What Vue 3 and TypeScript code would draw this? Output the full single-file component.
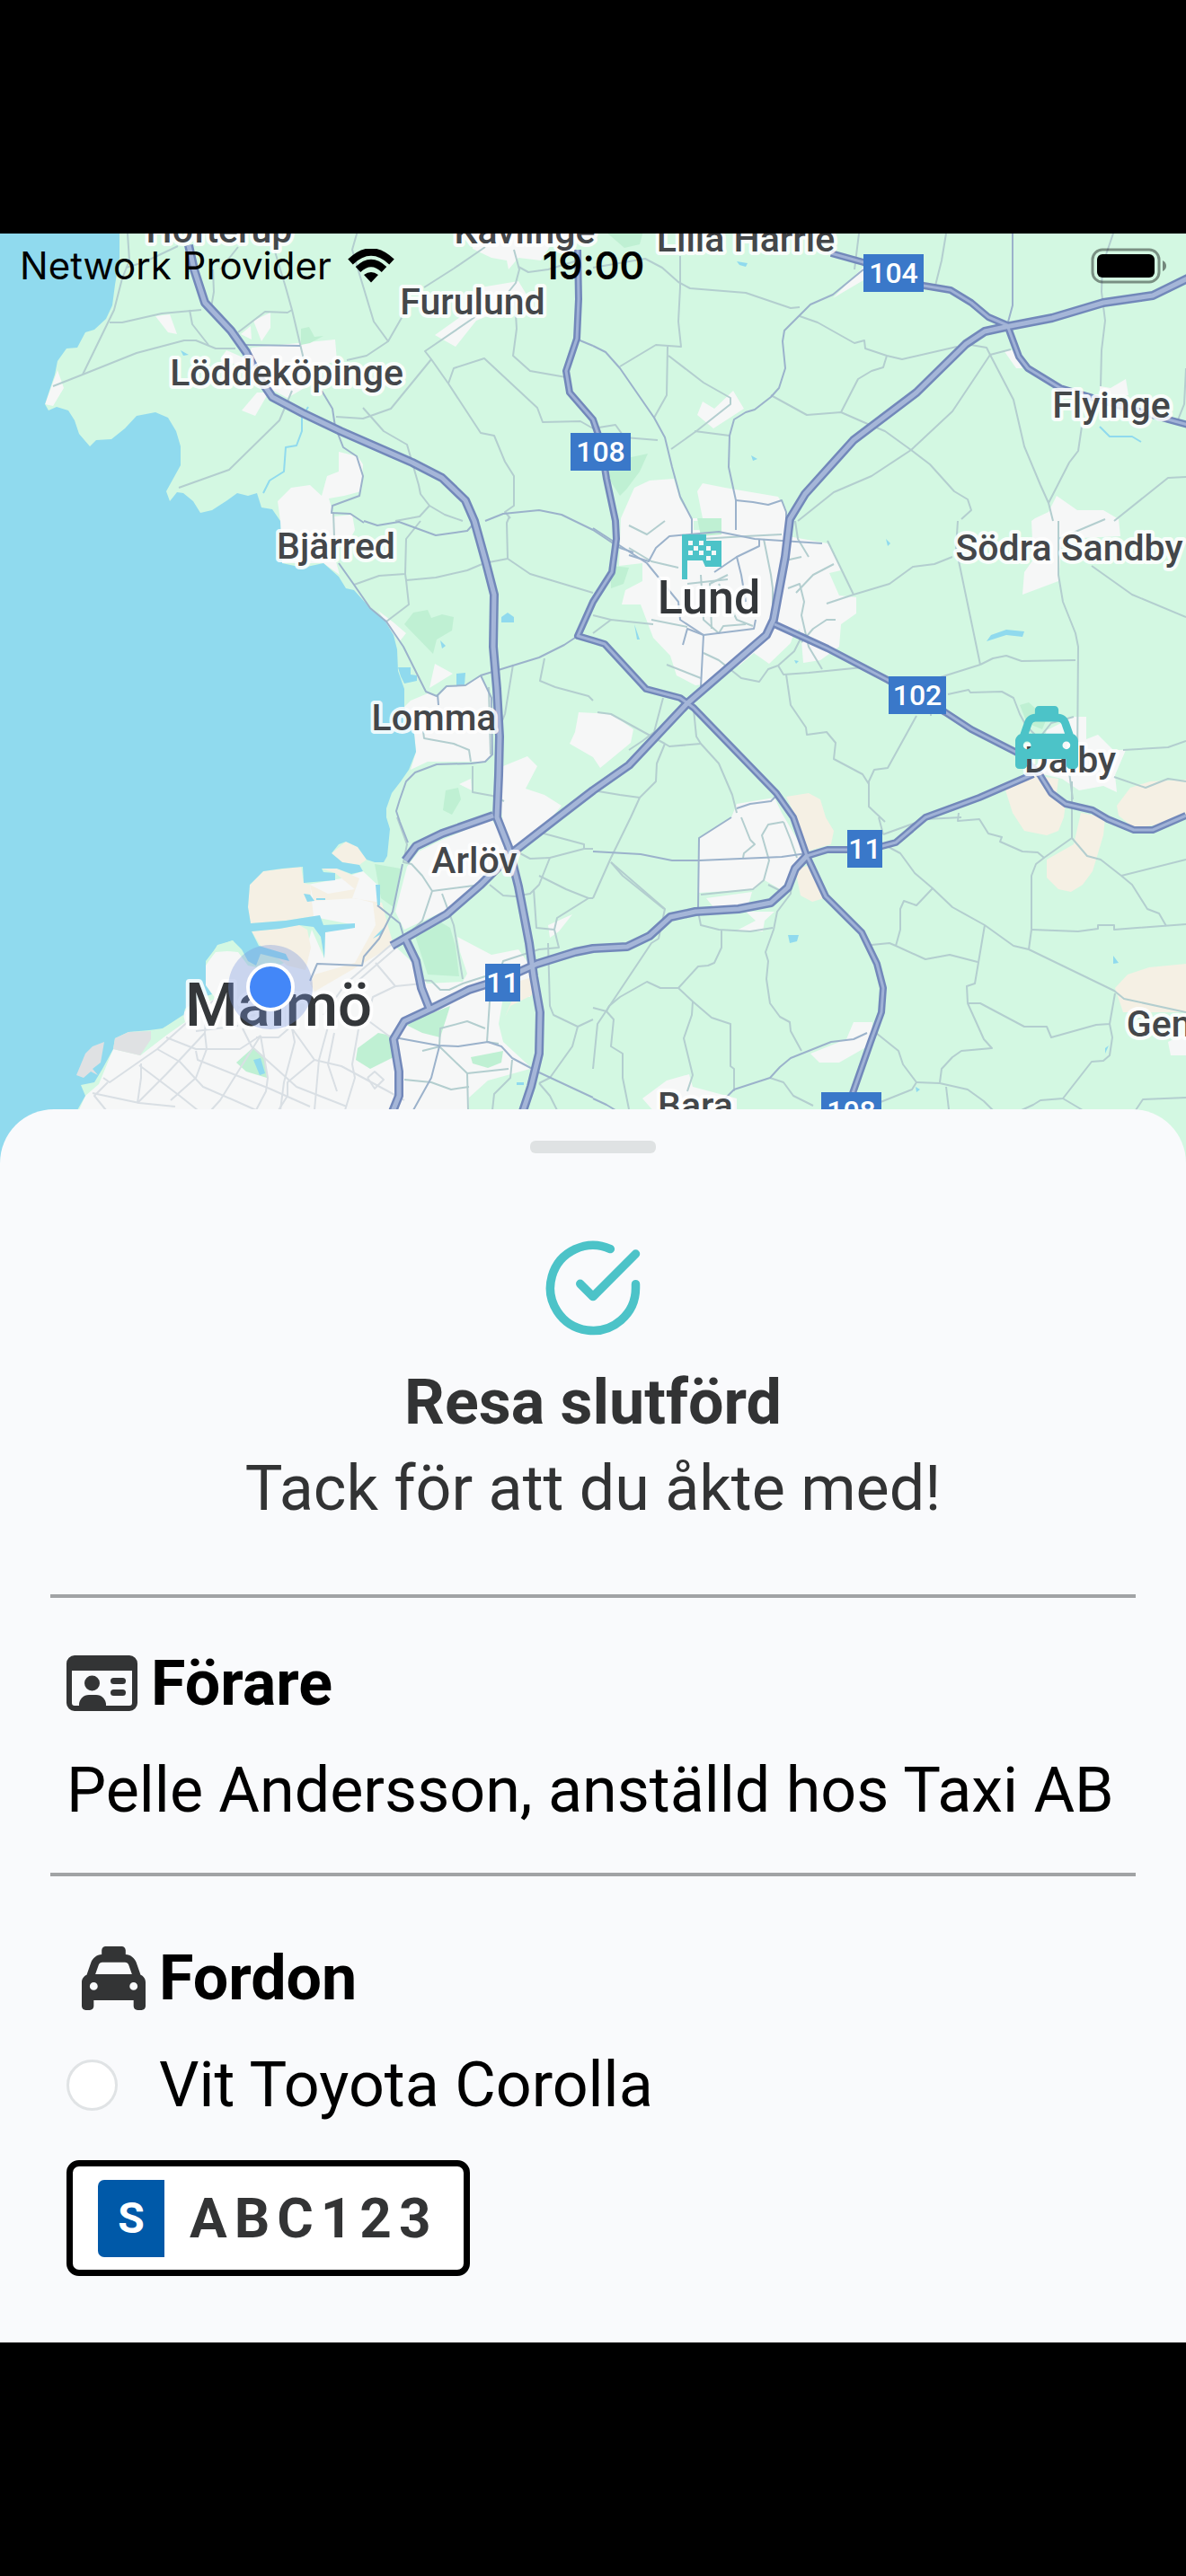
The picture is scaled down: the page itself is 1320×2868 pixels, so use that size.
<script setup lang="ts">
interface Label {
  text: string
  x: number
  y: number
  size?: 'city' | 'town'
}
interface Shield {
  text: string
  x: number
  y: number
  w: number
}

const taxiPath =
  'M192 0c-17.7 0-32 14.3-32 32V64v.2c-38.6 2.2-72.3 27.3-85.2 64.1L39.6 228.8C16.4 238.4 0 261.3 0 288V432v48c0 17.7 14.3 32 32 32H64c17.7 0 32-14.3 32-32V432H416v48c0 17.7 14.3 32 32 32h32c17.7 0 32-14.3 32-32V432 288c0-26.7-16.4-49.6-39.6-59.2L437.2 128.3c-12.9-36.8-46.6-62-85.2-64.1V64 32c0-17.7-14.3-32-32-32H192zM165.4 128H346.6c13.6 0 25.7 8.6 30.2 21.4L402.9 224H109.1l26.1-74.6c4.5-12.8 16.6-21.4 30.2-21.4zM96 288a32 32 0 1 1 0 64 32 32 0 1 1 0-64zm288 32a32 32 0 1 1 64 0 32 32 0 1 1 -64 0z'

const labels: Label[] = [
  { text: 'Hofterup', x: 244, y: 270 },
  { text: 'Kävlinge', x: 584, y: 271 },
  { text: 'Lilla Harrie', x: 830, y: 280 },
  { text: 'Furulund', x: 526, y: 350 },
  { text: 'Löddeköpinge', x: 319, y: 429 },
  { text: 'Flyinge', x: 1237, y: 465 },
  { text: 'Bjärred', x: 374, y: 622 },
  { text: 'Södra Sandby', x: 1190, y: 624 },
  { text: 'Lund', x: 789, y: 683, size: 'town' },
  { text: 'Lomma', x: 483, y: 813 },
  { text: 'Dalby', x: 1191, y: 860 },
  { text: 'Arlöv', x: 528, y: 972 },
  { text: 'Malmö', x: 310, y: 1142, size: 'city' },
  { text: 'Genarp', x: 1320, y: 1154 },
  { text: 'Bara', x: 774, y: 1245 },
]

const shields: Shield[] = [
  { text: '104', x: 961, y: 283, w: 67 },
  { text: '108', x: 635, y: 482, w: 67 },
  { text: '102', x: 989, y: 753, w: 64 },
  { text: '11', x: 943, y: 924, w: 39 },
  { text: '11', x: 540, y: 1073, w: 39 },
  { text: '108', x: 914, y: 1216, w: 67 },
]

const urban: string[] = [
  '280,387 373,378 375,402 345,410 337,433 320,443 295,430 274,403',
  '269,457 286,437 299,437 284,463',
  '173,352 189,350 197,372 187,370',
  '282,357 301,348 301,365 291,380',
  '268,372 279,363 280,378',
  '245,400 252,390 275,400 275,410',
  '64,412 71,432 59,452 50,450',
  '526,277 547,287 564,290 566,300 577,287 602,290 615,270 660,262 660,255 526,255',
  '484,373 522,346 535,320 577,313 589,333 530,357 507,386',
  '377,503 398,508 404,517 402,547 383,552 366,555 372,575 392,573 395,590 390,600 370,610 378,640 360,627 314,627 312,580 309,558 324,543 345,540 358,552 364,530 377,525',
  '691,577 706,543 723,535 750,533 757,557 770,577 782,577 776,547 782,538 807,543 866,553 875,567 877,597 921,605 929,617 936,635 923,638 934,663 953,665 953,683 936,695 934,720 913,735 894,738 892,713 883,707 881,715 856,739 839,727 824,740 782,762 774,763 753,752 746,730 727,710 713,673 692,673 696,657 715,647 715,627 689,630',
  '776,462 782,447 795,455 816,435 828,455 794,477',
  '1117,390 1127,390 1138,410 1131,410',
  '927,332 961,297 961,312',
  '1224,430 1236,432 1253,422 1256,440 1224,440',
  '1152,577 1167,570 1176,552 1199,568 1228,568 1245,578 1247,597 1182,600 1178,647 1138,662 1140,637 1150,623 1148,580',
  '644,793 681,795 705,812 702,827 668,855 660,843 634,828 640,815',
  '1195,798 1209,798 1209,823 1222,818 1239,835 1253,835 1241,863 1243,882 1228,875 1201,880 1182,867 1152,860 1165,813',
  '535,753 547,777 547,840 539,848 476,848 457,857 463,837 461,817 450,787 457,780 476,772 488,775 499,763 518,763',
  '484,739 504,750 478,766',
  '421,680 438,693 452,705 444,715',
  '587,842 598,853 585,878 606,885 625,897 606,920 572,948 560,920 555,870 560,853',
  '511,873 524,867 525,880',
  '547,912 492,935 466,948 453,965 440,1015 450,1035 497,1013 535,980 566,960 566,943',
  '86,1240 95,1220 110,1207 126,1168 156,1175 190,1148 206,1125 240,1112 229,1097 229,1075 240,1058 265,1060 276,1075 300,1080 340,1060 347,1035 361,1067 362,1038 395,1030 345,1020 342,985 380,978 404,970 420,985 424,1030 438,1052 463,1075 475,1095 515,1093 520,1084 512,1060 509,1043 547,1063 577,1057 590,1075 590,1110 560,1110 555,1140 560,1160 598,1195 545,1240',
  '814,910 820,895 862,888 870,905 898,953 886,970 868,990 851,980 840,990 778,994 778,933',
  '786,1000 837,993 833,1007 794,1010',
  '830,1015 862,1015 851,1025 849,1037 818,1037 841,1025',
  '1300,1160 1320,1150 1320,1175 1303,1175',
  '942,1157 950,1138 971,1138 969,1163 934,1183 912,1183 902,1173',
  '715,1223 742,1203 767,1196 771,1210 820,1223 820,1240 730,1240',
  '610,1030 637,1018 622,1037 612,1044',
]

const sand: string[] = [
  '278,985 293,970 335,965 338,983 345,985 349,1020 318,1025 279,1028 276,1010',
  '280,1037 311,1034 333,1030 342,1035 346,1055 340,1080 320,1075 290,1053',
  '369,950 385,937 398,943 408,957 400,963 381,960',
  '358,967 375,967 400,978 392,1000 425,1005 433,1035 438,1052 405,1072 350,1104 345,1095 350,1085 395,1072 418,1030 415,1005 395,1000 349,1003 345,985 365,995 395,990 373,972',
  '875,887 900,883 913,890 919,910 928,925 925,940 898,948 885,908',
  '885,968 902,963 917,1000 904,1004 891,997',
  '1117,873 1148,863 1178,867 1176,883 1186,895 1184,910 1178,925 1165,930 1140,925 1127,905',
  '1203,905 1230,910 1228,930 1216,970 1205,985 1192,993 1178,990 1165,977 1165,957 1195,940',
  '1243,897 1258,877 1280,870 1320,868 1320,908 1290,918 1262,922 1245,908',
  '1241,1100 1255,1085 1279,1077 1320,1073 1320,1127 1250,1127',
  '579,1092 592,1088 592,1108 568,1120 562,1132',
]

const meadow: string[] = [
  '522,1222 543,1203 590,1190 596,1240 522,1240',
  '772,580 803,580 803,590 772,590',
  '883,707 890,700 893,740 885,745 872,740',
]

const forest: string[] = [
  '450,695 460,682 476,679 480,688 492,684 505,687 503,702 486,712 482,728',
  '496,880 510,877 513,890 503,907 493,902',
  '459,1033 484,1023 501,1033 507,1053 511,1087 476,1085',
  '524,1177 560,1170 558,1183 543,1189 526,1184',
  '450,1140 501,1120 490,1155 470,1150',
  '398,1167 421,1150 436,1153 438,1177 412,1190 396,1180',
  '263,1183 282,1166 295,1177 297,1200 274,1193',
  '417,962 446,967 438,1010 424,1000',
  '335,366 344,364 350,375 360,374 345,382 335,384',
  '675,515 721,505 712,525 697,545 690,552 679,535',
  '673,257 716,257 712,272 695,276',
  '680,630 700,632 694,650 680,655',
  '776,577 803,577 803,595 780,597',
  '1135,785 1145,782 1165,800 1160,812 1143,805',
]

const ponds: string[] = [
  '282,1180 290,1178 295,1195 289,1197',
  '558,687 565,682 572,687 572,693 558,693',
  '443,743 457,743 457,751 464,752 464,758 450,761 446,753',
  '508,750 518,749 517,763 508,764',
  '490,713 496,719 492,722',
  '201,390 210,395 204,396',
  '1098,714 1103,707 1120,701 1140,703 1138,709 1120,707',
  '706,695 712,712 709,712',
  '877,1041 889,1041 887,1048 879,1050',
  '1239,1064 1245,1072 1239,1073',
  '1230,1167 1234,1164 1230,1173',
  '836,507 843,511 838,513',
  '986,600 991,605 988,608',
  '820,291 832,293 830,297 823,295',
  '1019,1210 1024,1213 1020,1216',
  '415,1045 430,1030 424,1040',
  '418,985 423,985 423,1008 420,1008',
  '338,995 345,996 350,1003 342,1004',
  '352,1000 362,1000 362,1002 352,1002',
  '575,1205 583,1205 583,1208 575,1208',
  '884,735 889,736 886,739',
]

const minorRoads: string[] = [
  '142,260 144,290 136,310 127,345 92,417',
  '59,430 92,417 152,393 205,379 218,379 240,388 262,388',
  '122,359 136,359 180,349 224,345',
  '211,345 214,361 232,384',
  '198,274 160,292 140,298',
  '237,300 238,325 235,342',
  '245,300 265,275',
  '306,280 318,320 325,345 338,400',
  '265,370 295,347 320,348 325,345',
  '398,257 392,278 400,305 416,358 432,380 448,352',
  '432,380 408,396 386,401',
  '325,435 311,468 255,523 199,543',
  '540,275 505,299 472,320',
  '572,278 578,300 574,315 566,325 573,333 575,366 571,396 590,413 630,420',
  '577,297 588,303 610,300 643,290',
  '530,352 473,391 480,400 435,455 404,466 374,464',
  '480,400 499,427 535,482 550,485 562,514 572,530 572,563 562,570 568,577',
  '499,427 505,410 539,399 598,454 604,470 646,469 660,477',
  '404,454 427,480 453,495 466,540 468,550 478,563 467,575 440,580',
  '478,563 495,573 515,580',
  '371,570 373,625',
  '394,651 422,641 451,639 452,600 468,580',
  '451,639 452,646 485,643 520,635 539,627 565,622 564,582 567,575',
  '452,646 455,673 430,692',
  '565,622 590,639 660,660',
  '571,740 562,795 558,805',
  '606,733 601,758 618,765 655,775 660,780',
  '471,814 472,822 505,828 522,835 524,848',
  '526,853 526,882 548,886 561,892',
  '544,765 546,840',
  '660,298 718,288 737,298 755,314 768,321 830,326 880,343 890,342',
  '757,285 757,320 755,358 758,386 730,384 690,408',
  '743,386 742,440 728,465',
  '744,396 783,426 813,443 813,450 775,480 747,500',
  '773,480 812,485',
  '890,352 910,359 951,382 962,379 963,388 987,396 1004,400 1065,386',
  '987,396 983,409 970,413 955,422 936,459',
  '858,440 898,462 936,459 968,473 985,480 1014,501 1035,517 1062,547 1077,556 1081,568 1070,578',
  '1075,383 1098,387 1102,395 1125,389',
  '1102,395 1060,458 1014,501 970,530 928,548 888,580',
  '1102,395 1128,445 1140,497 1158,540 1167,560 1172,580',
  '1167,560 1190,515 1200,502 1204,475',
  '1240,580 1300,532 1320,531',
  '1053,260 1048,290 1040,322',
  '956,260 951,300',
  '1239,260 1227,295 1226,325 1230,357 1226,390 1225,430',
  '1320,410 1318,450 1310,470',
  '660,477 685,473 695,487 732,490',
  '1066,580 1064,610 1091,740',
  '1091,740 1105,733 1120,730 1137,736 1197,735',
  '1060,620 1040,628 1016,631 990,650 950,662 920,672',
  '921,602 950,662',
  '1091,740 1037,757 1036,797',
  '1178,580 1178,640 1183,670 1197,705 1200,720 1199,850',
  '1178,600 1230,578',
  '1215,630 1260,662 1320,687',
  '1055,773 1078,768 1080,771 1115,770 1128,777 1135,795 1142,808 1152,818',
  '1020,797 988,855 973,857 967,870 967,898 985,915',
  '875,751 880,785 897,810 898,818 920,815 930,827 928,845 960,862 967,873',
  '866,741 872,751 900,749 960,743',
  '894,705 884,725 866,741 855,745 845,759 825,755 800,735 783,727',
  '660,705 680,690 727,695',
  '680,690 660,685',
  '740,580 720,595 700,585',
  '738,777 728,815 715,825 700,835',
  '772,790 775,820 780,828 745,831 740,828 680,795 665,793',
  '740,828 731,850 730,870 712,888 690,885 660,880',
  '712,888 702,910 680,955 660,1000',
  '780,828 800,850 815,885 820,905',
  '742,740 780,755',
  '780,600 830,597 870,595',
  '850,600 858,640 860,655 860,680',
  '877,655 890,650 895,670 892,685 900,720 915,745',
  '886,660 905,640 928,628',
  '892,715 905,700 920,690 930,690',
  '892,620 870,625',
  '885,580 888,600 900,620',
  '810,640 790,650 792,700',
  '780,640 783,690 800,705 805,697 830,695',
  '765,650 810,645',
  '725,690 765,698',
  '800,650 820,690 838,697',
  '700,610 725,625 755,632',
  '680,960 740,1012 733,1045 725,1050 665,1140 660,1190',
  '680,960 693,975 739,1012',
  '777,1015 780,1030 800,1035 835,1037 860,1033',
  '803,1036 803,1055 795,1072 788,1075 777,1076 755,1100',
  '755,1100 735,1100 720,1093 690,1110 678,1120 675,1126 660,1122',
  '755,1100 771,1115 792,1133 813,1140 813,1187 817,1190 817,1215',
  '771,1115 770,1130 761,1156 771,1197 765,1215',
  '675,1126 683,1135 680,1165 693,1173 693,1200 700,1235',
  '882,965 880,995 865,1015 861,1035 852,1060 855,1070 853,1090 857,1117 868,1132 879,1138 880,1148 892,1170',
  '970,1052 990,1050 997,1053 1030,1068 1057,1063 1088,1071',
  '997,1053 1002,1035 1002,1012 1006,1003 1020,1008 1038,989 1018,972 1002,950 987,942',
  '1038,989 1060,1010 1096,1030 1128,1053 1145,1057 1240,1103 1251,1112 1320,1127',
  '1096,1030 1085,1095 1076,1098 1077,1117 1095,1157 1104,1167 1070,1170 1060,1177 1048,1190 1046,1205',
  '1077,1117 1091,1117 1140,1143 1165,1143 1170,1155 1220,1141 1235,1140 1241,1106',
  '1235,1140 1238,1155 1235,1175 1228,1181 1215,1182 1183,1223 1158,1225 1150,1230 1137,1236',
  '1183,1223 1205,1236',
  '1145,1057 1148,1035 1148,975 1153,962 1162,955 1155,949 1138,948 1113,937 1115,932 1100,928 1090,912 1066,914 1067,905',
  '1148,1035 1200,1037 1222,1034 1222,1030 1240,1030 1240,1035 1320,1029',
  '1162,955 1193,933 1193,870',
  '1193,933 1210,953 1225,957 1248,975 1260,985 1277,1012 1290,1017 1298,1031',
  '1248,975 1320,957',
  '983,929 1030,912 1070,910',
  '983,929 978,910',
  '975,1150 1000,1170 1005,1185 1020,1205 1015,1213 980,1227',
  '1020,1205 1046,1206 1077,1213 1095,1226 1105,1236',
  '1053,1210 1056,1235',
  '1264,1236 1272,1224 1320,1222',
  '857,1200 872,1205 883,1220 905,1231',
  '1250,835 1300,832 1320,825',
  '1240,865 1275,877 1300,867 1320,870',
  '1190,860 1194,890',
  '1150,830 1170,805 1195,798',
  '825,910 835,935 840,940 828,950 827,955',
  '872,915 855,918 848,930 856,958 850,980 838,990 780,996',
  '872,915 880,935 887,955',
  '855,985 875,995',
  '442,910 453,940 449,960 458,962 470,975 481,992 535,985',
  '481,992 470,1025 450,1045',
  '492,995 505,1030 515,1090',
  '545,985 560,997 573,998 590,995 600,985 612,955 650,945 660,945',
  '575,948 590,956 612,955',
  '600,975 630,990 655,1000 660,1000',
  '594,990 597,1033 617,1035 622,1055 600,1057 560,1070 555,1085',
  '594,925 650,940 650,945',
  '617,1035 620,1022 655,1000',
  '610,1050 612,1120 616,1130 643,1143 637,1165 612,1200 600,1206',
  '643,1143 660,1135',
  '466,1091 480,1092 490,1102 500,1102 515,1095 540,1087',
  '545,1115 542,1160 555,1162',
  '489,1165 520,1195 521,1236',
  '489,1165 490,1145 520,1137 540,1145',
  '570,1180 568,1200 550,1218 548,1236',
  '520,1195 566,1190',
  '450,1202 480,1205 502,1213 522,1210',
  '600,1206 612,1220 620,1236',
  '470,1170 490,1165',
]

const streets: string[] = [
  '120,1205 105,1220 118,1236',
  '115,1200 122,1205 175,1168 212,1135 240,1112',
  '103,1217 155,1228 195,1232',
  '157,1184 157,1200 153,1228',
  '185,1155 218,1168 267,1168 290,1153',
  '175,1168 200,1182 226,1210 265,1227 285,1236',
  '155,1186 200,1220 220,1236',
  '153,1228 185,1196 228,1150 230,1120',
  '228,1150 230,1168 218,1200 190,1225',
  '218,1170 220,1180 300,1212 345,1232',
  '270,1145 280,1165 330,1210 386,1232',
  '290,1153 298,1200 296,1215 285,1236',
  '290,1153 245,1225 235,1236',
  '325,1145 328,1160 316,1205 312,1236',
  '325,1145 350,1180 380,1187 432,1215 450,1225',
  '370,1125 355,1180 350,1236',
  '400,1140 392,1185 395,1200 384,1236',
  '372,1150 365,1185 375,1215',
  '409,1200 417,1193 427,1202 417,1212 409,1200',
  '350,1180 320,1205 320,1220 310,1236',
  '418,1072 440,1098 470,1095',
  '440,1098 415,1110 408,1135 435,1155',
  '435,1052 385,1095 360,1130',
  '440,1056 395,1095 370,1130',
  '285,1155 310,1155 325,1142',
  '218,1148 265,1142',
]

const mediumRoads: string[] = [
  '274,384 334,385',
  '358,435 370,455 373,475 382,498 397,508 404,530 400,552 370,563 369,571 390,572 405,582',
  '405,580 420,585 444,581 485,596 520,591 530,580',
  '540,580 560,572 600,568 625,573 660,590 690,610 705,615',
  '377,627 394,651 412,677 430,692 449,720 474,770 486,775 497,764 518,763 535,752 600,732 628,718 643,708',
  '487,773 488,785',
  '660,385 674,392 690,410 728,465 740,487 748,520 757,553 770,578 770,600',
  '961,300 927,328 902,339 873,368 871,380 874,410 867,432 858,442 840,456 830,459 817,467 812,485 811,520 819,557 819,590',
  '819,557 838,559 855,562 870,557 875,570 875,580',
  '1127,260 1127,340 1121,362',
  '643,378 660,385',
  '535,752 547,777 548,840 540,848 524,850 486,851 462,860 452,870 445,890 441,903 445,915 454,938',
  '448,962 437,1015 422,1045 405,1065 403,1075 353,1073 345,1092',
  '420,1008 445,1028 450,1045',
  '439,1155 488,1164 510,1165 543,1160 558,1165 570,1178 600,1194 660,1222',
  '489,1165 480,1200 460,1236',
  '660,948 713,951 748,958 778,958 870,954 898,950',
  '814,910 778,933 777,1010',
  '820,900 835,895 858,892 865,885',
  '817,1213 857,1200 868,1188 880,1178 925,1160 950,1157 965,1150',
  '817,1213 805,1225',
  '660,1223 675,1230 685,1236',
  '700,618 722,625 730,610 745,597 800,592 840,600 915,605',
  '760,718 765,700 783,707 839,700 841,690',
  '660,588 720,627 755,670 757,690 783,707 780,765 775,780',
  '845,600 845,608 820,620 825,640 830,670',
  '820,620 795,637',
]

const major: string[] = [
  '643,278 644,333 642,377 630,413 634,437 660,467 668,490 675,533 685,580 686,600 681,637 660,670 643,708 660,713 673,717 719,767 757,777 772,788 864,883 883,910 898,953 919,998 959,1038 976,1073 983,1100 981,1127 969,1160 948,1220',
  '862,695 921,722 988,757 1052,793 1081,812 1132,838 1157,862 1170,883 1186,895 1216,902 1233,912 1262,924 1283,924 1320,908',
  '925,282 961,292 1028,318 1058,323 1081,337 1100,353 1121,362 1134,397 1144,410 1180,432 1240,450 1300,467 1330,475',
  '1150,862 1090,888 1030,910 997,938 982,942 946,946 921,946 898,953',
]

const motorways: string[] = [
  '210,273 216,300 228,337 257,368 274,392 290,423 303,442 337,460 379,480 459,515 492,532 518,557 528,580 541,627 550,662 549,720 553,767 556,820 555,863 553,910 566,943 577,987 589,1050 594,1087 601,1127 600,1173 591,1210 581,1240',
  '1330,306 1283,329 1228,337 1171,354 1119,364 1096,369 1075,383 1020,437 950,490 896,550 879,578 874,620 866,663 861,690 853,707 765,783 700,852 660,880 621,910 572,948 535,985 497,1018 436,1053',
  '898,953 885,967 877,988 858,1005 822,1012 774,1015 746,1021 723,1042 698,1054 660,1056 640,1060 598,1073 560,1090 522,1102 480,1123 450,1137 438,1157 444,1193 444,1220 436,1240',
  '450,1043 463,1070 469,1100 478,1123',
  '549,908 492,928 463,942 451,958',
]
</script>

<template>
  <main class="screen">
    <section class="map" aria-label="Karta">
      <svg class="map-canvas" viewBox="0 260 1320 1040" preserveAspectRatio="xMidYMin slice">
        <rect class="land" x="0" y="260" width="1320" height="1040" />
        <polygon v-for="p in urban" :key="p" class="urban" :points="p" />
        <polygon v-for="p in sand" :key="p" class="sand" :points="p" />
        <polygon v-for="p in meadow" :key="p" class="land" :points="p" />
        <polygon v-for="p in forest" :key="p" class="forest" :points="p" />
        <polygon
          class="water"
          points="0,260 133,260 133,287 128,317 125,340 118,355 105,367 95,370 86,387 74,388 64,402 61,417 50,450 54,457 63,453 76,457 83,468 88,483 100,497 107,490 124,489 139,477 152,463 173,459 187,465 196,480 201,497 201,518 185,547 189,558 197,548 204,549 215,558 223,571 236,568 253,557 264,549 276,552 286,549 291,565 303,567 312,580 314,627 337,632 360,627 377,642 385,655 394,657 412,677 429,692 438,707 442,723 443,747 450,767 450,787 461,817 463,837 455,857 446,870 436,883 430,900 430,910 434,923 431,953 427,960 417,960 408,957 398,943 385,937 377,940 369,950 381,960 400,963 404,970 391,973 375,967 358,967 360,971 373,972 373,980 349,982 338,983 337,965 314,967 293,970 278,985 276,1010 279,1028 318,1025 356,1019 360,1030 395,1028 395,1033 362,1038 361,1067 357,1043 349,1032 333,1030 311,1034 280,1037 288,1053 318,1062 322,1070 290,1062 285,1075 276,1070 269,1057 259,1047 242,1053 229,1070 229,1097 236,1107 226,1110 206,1123 204,1132 181,1145 166,1147 143,1149 128,1156 126,1168 114,1190 105,1205 90,1208 95,1220 86,1236 86,1300 0,1300"
        />
        <polygon class="land" points="229,1074 242,1052 259,1047 264,1058 240,1060" />
        <polygon class="land" points="204,1130 181,1145 168,1150 156,1175 186,1152 206,1138" />
        <polygon class="paved" points="128,1156 143,1149 168,1148 168,1157 156,1175 126,1168" />
        <polygon class="paved" points="116,1160 112,1183 103,1190 109,1197 101,1193 93,1200 85,1197 95,1173 103,1165" />
        <polygon v-for="p in ponds" :key="p" class="water" :points="p" />
        <polyline class="stream" points="343,453 336,465 336,480 330,496 318,498 316,525 300,535 293,549" />
        <polyline class="stream" points="1224,475 1235,486 1260,486 1270,492" />
        <polyline v-for="p in streets" :key="p" class="street" :points="p" />
        <polyline v-for="p in minorRoads" :key="p" class="minor" :points="p" />
        <polyline v-for="p in mediumRoads" :key="p" class="medium" :points="p" />
        <polyline v-for="p in major" :key="p" class="major-edge" :points="p" />
        <polyline v-for="p in motorways" :key="p" class="motorway-edge" :points="p" />
        <polyline v-for="p in major" :key="p" class="major-fill" :points="p" />
        <polyline v-for="p in motorways" :key="p" class="motorway-fill" :points="p" />
        <g v-for="s in shields" :key="`${s.x}-${s.y}`">
          <rect class="shield" :x="s.x" :y="s.y" :width="s.w" height="42" />
          <text class="shield-text" :x="s.x + s.w / 2" :y="s.y + 32">{{ s.text }}</text>
        </g>
        <text v-for="l in labels" :key="l.text" class="place" :class="l.size" :x="l.x" :y="l.y">{{ l.text }}</text>

        <path
          class="accent"
          fill-rule="evenodd"
          d="M759 595h27v7h17v29h-18l-3-7h-17v21h-6zM766 602v5h5v-5zM778 602v5h5v-5zM772 608v5h5v-5zM766 613v5h5v-5zM778 613v5h5v-5zM786 608v5h5v-5zM792 613v5h5v-5zM786 619v5h5v-5z"
        />
        <svg class="accent" x="1130" y="786" width="70" height="70" viewBox="0 0 512 512">
          <path :d="taxiPath" />
        </svg>
        <circle class="halo" cx="301" cy="1099" r="47" />
        <circle class="dot" cx="301" cy="1099" r="25" />
      </svg>
      <header class="status">
        <div class="carrier">
          <span>Network Provider</span>
          <svg width="52" height="38" viewBox="0 0 52 38" aria-hidden="true">
            <g fill="none" stroke="#000" stroke-width="8">
              <path d="M3 14.500Q26-7.500 49 14.500" />
              <path d="M11.500 23Q26 9 40.500 23" />
            </g>
            <path d="M18 29Q26 23 34 29L26 37.500z" />
          </svg>
        </div>
        <time class="clock">19:00</time>
        <svg class="battery" width="85" height="40" viewBox="0 0 85 40" aria-hidden="true">
          <rect x="2" y="2" width="74" height="36" rx="11" fill="none" stroke="#000" stroke-opacity=".42" stroke-width="3" />
          <rect x="7" y="7" width="64" height="26" rx="6" />
          <path d="M80 14q4 2 4 6t-4 6z" fill-opacity=".45" />
        </svg>
      </header>
    </section>

    <section class="sheet">
      <div class="grabber"></div>
      <div class="summary">
        <svg class="check" viewBox="0 0 24 24" aria-hidden="true">
          <path d="M22 11.080V12a10 10 0 1 1-5.930-9.140" />
          <path d="M22 4 12 14.010l-3-3" />
        </svg>
        <h1>Resa slutförd</h1>
        <p>Tack för att du åkte med!</p>
      </div>
      <hr />
      <section class="driver">
        <h2>
          <svg width="79" height="62" viewBox="0 0 79 62" aria-hidden="true">
            <path fill-rule="evenodd" d="M9 0h61a9 9 0 0 1 9 9v44a9 9 0 0 1-9 9H9a9 9 0 0 1-9-9V9a9 9 0 0 1 9-9zM6 17v36a3 3 0 0 0 3 3h61a3 3 0 0 0 3-3V17z" />
            <circle cx="28.500" cy="31" r="8.500" />
            <path d="M14 57v-2a11 11 0 0 1 11-11h8a11 11 0 0 1 11 11v2z" />
            <rect x="49" y="25" width="17" height="7" rx="3.500" />
            <rect x="49" y="38" width="17" height="7" rx="3.500" />
          </svg>
          Förare
        </h2>
        <p>Pelle Andersson, anställd hos Taxi AB</p>
      </section>
      <hr />
      <section class="vehicle">
        <h2>
          <svg class="taxi" width="71" height="71" viewBox="0 0 512 512" aria-hidden="true">
            <path :d="taxiPath" />
          </svg>
          Fordon
        </h2>
        <p><span class="swatch"></span>Vit Toyota Corolla</p>
        <div class="plate">
          <span class="country">S</span>
          <span class="number">ABC123</span>
        </div>
      </section>
    </section>
  </main>
</template>

<style>
body {
  margin: 0;
  background: #000;
}
</style>

<style scoped>
.screen {
  padding: 260px 0;
  background: #000;
  font-family: Roboto, 'Liberation Sans', sans-serif;
}
.map {
  position: relative;
  overflow: hidden;
}
.map-canvas {
  display: block;
  width: 100%;
}
.land { fill: #d3f8e2; }
.urban { fill: #f6f7f7; }
.sand { fill: #f5f0e4; }
.forest { fill: #bff0d3; }
.water { fill: #90daee; }
.paved { fill: #dfe1e3; }
polyline {
  fill: none;
  stroke-linejoin: round;
}
.stream { stroke: #90daee; stroke-width: 2; }
.street { stroke: #d9dfe4; stroke-width: 2; }
.minor { stroke: #b3cecf; stroke-width: 2; }
.medium { stroke: #9bb2cb; stroke-width: 2; }
.major-edge { stroke: #7288ba; stroke-width: 8; }
.major-fill { stroke: #a0b2d6; stroke-width: 3; }
.motorway-edge { stroke: #7288ba; stroke-width: 10; }
.motorway-fill { stroke: #a5b6d8; stroke-width: 5; }
.shield { fill: #3a78c9; }
.shield-text {
  fill: #fff;
  font-size: 32px;
  font-weight: 500;
  text-anchor: middle;
}
.place {
  fill: #44474a;
  stroke: #fff;
  stroke-opacity: 0.85;
  stroke-width: 8px;
  stroke-linejoin: round;
  paint-order: stroke;
  font-size: 41px;
  font-weight: 500;
  text-anchor: middle;
}
.town {
  fill: #34373a;
  font-size: 52px;
}
.city {
  fill: #34373a;
  font-size: 67px;
}
.accent { fill: #4cc3c8; }
.halo { fill: #7896dc; fill-opacity: 0.35; }
.dot { fill: #4387f8; stroke: #fff; stroke-width: 4; }

.status {
  position: absolute;
  top: 16px;
  left: 22px;
  right: 21px;
  display: grid;
  grid-template-columns: 1fr auto 1fr;
  align-items: center;
  height: 40px;
  font: 400 42px/40px Inter, 'Liberation Sans', sans-serif;
}
.carrier {
  display: flex;
  align-items: center;
  gap: 18px;
}
.clock {
  font-weight: 600;
}
.battery {
  justify-self: end;
}

.sheet {
  position: relative;
  margin-top: -65px;
  padding: 35px 56px 74px;
  border-radius: 60px 60px 0 0;
  background: #f9fafc;
  color: #000;
  font-size: 70px;
  line-height: 96px;
}
.grabber {
  width: 140px;
  height: 14px;
  margin: 0 auto;
  border-radius: 6px;
  background: #dfe2e3;
}
.summary {
  display: flex;
  flex-direction: column;
  align-items: center;
  padding: 93px 0 70px;
  color: #323334;
}
.check {
  width: 114px;
  height: 114px;
  margin-bottom: 22px;
  fill: none;
  stroke: #4cc3c8;
  stroke-width: 2;
  stroke-linecap: round;
  stroke-linejoin: round;
}
h1,
h2,
p {
  margin: 0;
  font-size: 70px;
}
h1,
h2 {
  font-weight: 700;
}
hr {
  height: 4px;
  margin: 0;
  border: 0;
  background: #a1a3a5;
}
h2,
.vehicle p {
  display: flex;
  align-items: center;
}
h2 {
  gap: 15px;
  margin-bottom: 23px;
}
h2 svg {
  fill: #333435;
}
.driver {
  padding: 47px 18px 44px;
}
.vehicle {
  padding: 65px 18px 0;
}
.taxi {
  margin-left: 17px;
}
.vehicle p {
  gap: 46px;
}
.swatch {
  box-sizing: border-box;
  width: 57px;
  height: 57px;
  border: 3px solid #e0e3e5;
  border-radius: 50%;
  background: #fff;
}
.plate {
  display: inline-flex;
  align-items: center;
  gap: 28px;
  box-sizing: border-box;
  height: 129px;
  margin-top: 36px;
  padding: 0 28px;
  border: 7px solid #000;
  border-radius: 14px;
  background: #fff;
  vertical-align: top;
}
.country {
  width: 74px;
  height: 86px;
  border-radius: 7px 0 0 7px;
  background: #0059a8;
  color: #fff;
  font-size: 48px;
  font-weight: 700;
  line-height: 86px;
  text-align: center;
}
.number {
  color: #333435;
  font-size: 62px;
  font-weight: 700;
  letter-spacing: 8px;
}
</style>
